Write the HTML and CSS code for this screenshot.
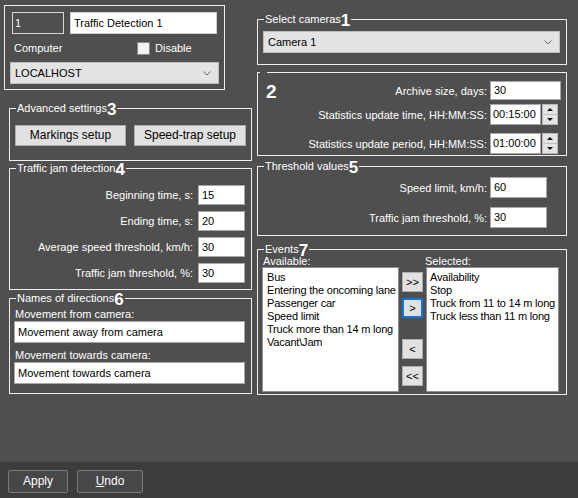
FILE: index.html
```html
<!DOCTYPE html>
<html>
<head>
<meta charset="utf-8">
<link rel="stylesheet" href="styles.css">
</head>
<body>
<div class="window">
  <div class="main">
    <div class="col-left">
      <div class="group g-general">
        <div class="r-ids">
          <div class="field id-field">1</div>
          <div class="field name-field">Traffic Detection 1</div>
        </div>
        <div class="r-comp">
          <span class="comp-label">Computer</span>
          <span class="check"><span class="box"></span>Disable</span>
        </div>
        <div class="combo c-host">LOCALHOST<svg class="chev" width="8" height="5" viewBox="0 0 8 5"><polyline points="0.5,0.5 4,4 7.5,0.5" fill="none" stroke="#6a6a6a" stroke-width="1"/></svg></div>
      </div>

      <div class="group g-adv">
        <span class="legend">Advanced settings<b>3</b></span>
        <div class="btn-row">
          <div class="btn b-mark">Markings setup</div>
          <div class="btn b-trap">Speed-trap setup</div>
        </div>
      </div>

      <div class="group g-jam">
        <span class="legend">Traffic jam detection<b>4</b></span>
        <div class="frow"><span>Beginning time, s:</span><div class="field num">15</div></div>
        <div class="frow"><span>Ending time, s:</span><div class="field num">20</div></div>
        <div class="frow"><span>Average speed threshold, km/h:</span><div class="field num">30</div></div>
        <div class="frow"><span>Traffic jam threshold, %:</span><div class="field num">30</div></div>
      </div>

      <div class="group g-names">
        <span class="legend">Names of directions<b>6</b></span>
        <div class="nlabel">Movement from camera:</div>
        <div class="field wide">Movement away from camera</div>
        <div class="nlabel second">Movement towards camera:</div>
        <div class="field wide">Movement towards camera</div>
      </div>
    </div>

    <div class="col-right">
      <div class="group g-cams">
        <span class="legend">Select cameras<b>1</b></span>
        <div class="combo c-cam">Camera 1<svg class="chev" width="8" height="5" viewBox="0 0 8 5"><polyline points="0.5,0.5 4,4 7.5,0.5" fill="none" stroke="#6a6a6a" stroke-width="1"/></svg></div>
      </div>

      <div class="group g-stats">
        <span class="legend empty"></span>
        <div class="srow s1">
          <span class="big-num">2</span>
          <span>Archive size, days:</span>
          <div class="slot"><div class="field arch">30</div></div>
        </div>
        <div class="srow s2">
          <span>Statistics update time, HH:MM:SS:</span>
          <div class="slot"><div class="field time">00:15:00</div><div class="spin"><span class="up"></span><span class="down"></span></div></div>
        </div>
        <div class="srow s3">
          <span>Statistics update period, HH:MM:SS:</span>
          <div class="slot"><div class="field time">01:00:00</div><div class="spin"><span class="up"></span><span class="down"></span></div></div>
        </div>
      </div>

      <div class="group g-thr">
        <span class="legend">Threshold values<b>5</b></span>
        <div class="srow t1">
          <span>Speed limit, km/h:</span>
          <div class="slot"><div class="field thr">60</div></div>
        </div>
        <div class="srow t2">
          <span>Traffic jam threshold, %:</span>
          <div class="slot"><div class="field thr">30</div></div>
        </div>
      </div>

      <div class="group g-events">
        <span class="legend">Events<b>7</b></span>
        <div class="ev-head">
          <span class="h-avail">Available:</span>
          <span class="h-sel">Selected:</span>
        </div>
        <div class="ev-body">
          <div class="list l-avail">
            <div>Bus</div>
            <div>Entering the oncoming lane</div>
            <div>Passenger car</div>
            <div>Speed limit</div>
            <div>Truck more than 14 m long</div>
            <div>Vacant\Jam</div>
          </div>
          <div class="mv-col">
            <div class="mv m1">&gt;&gt;</div>
            <div class="mv m2 active">&gt;</div>
            <div class="mv m3">&lt;</div>
            <div class="mv m4">&lt;&lt;</div>
          </div>
          <div class="list l-sel">
            <div>Availability</div>
            <div>Stop</div>
            <div>Truck from 11 to 14 m long</div>
            <div>Truck less than 11 m long</div>
          </div>
        </div>
      </div>
    </div>
  </div>
  <div class="footer">
    <div class="fbtn f-apply">Apply</div>
    <div class="fbtn f-undo"><u>U</u>ndo</div>
  </div>
</div>
</body>
</html>
```

FILE: styles.css
```css
* { box-sizing: border-box; }
html, body { margin: 0; padding: 0; }
body {
  width: 578px;
  height: 498px;
  background: #4f4f4f;
  font-family: "Liberation Sans", Arial, sans-serif;
  font-size: 11px;
  color: #ffffff;
  overflow: hidden;
}
.window { width: 578px; height: 498px; display: flex; flex-direction: column; }
.main { height: 462px; display: flex; background: #4f4f4f; }
.col-left { width: 252px; display: flex; flex-direction: column; }
.col-right { width: 310px; margin-left: 5px; display: flex; flex-direction: column; }

.group {
  position: relative;
  border: 1px solid #eeeeee;
}
.legend {
  position: absolute;
  top: -8px;
  left: 6px;
  background: #4f4f4f;
  padding: 0 1px;
  line-height: 14px;
  height: 14px;
  white-space: nowrap;
}
.legend.empty { width: 7px; left: 2px; }
.legend b {
  font-size: 17px;
  line-height: 0;
  vertical-align: -3px;
  font-weight: bold;
}

.field {
  height: 22px;
  background: #ffffff;
  border: 1px solid #a8a8a8;
  color: #000;
  line-height: 20px;
  padding-left: 3px;
  white-space: nowrap;
  overflow: hidden;
}

/* general */
.g-general { margin: 5px 0 0 4px; width: 221px; height: 85px; padding: 6px 0 0 5px; }
.r-ids { display: flex; margin-left: 2px; }
.id-field { width: 52px; background: #4f4f4f; border-color: #d6d6d6; color: #fff; padding-left: 2px; }
.name-field { width: 147px; margin-left: 6px; border-color: #cfcfcf; }
.r-comp { height: 28px; display: flex; align-items: center; }
.comp-label { width: 127px; padding-left: 4px; }
.check { display: flex; align-items: center; }
.box { width: 13px; height: 13px; background: #f3f3f3; border: 1px solid #8a8a8a; margin-right: 5px; }

.combo {
  position: relative;
  height: 22px;
  background: #e3e3e3;
  border: 1px solid #bdbdbd;
  color: #000;
  line-height: 20px;
  padding-left: 4px;
}
.chev { position: absolute; right: 7px; top: 8px; }
.c-host { width: 209px; }
.c-cam { width: 297px; }

/* advanced */
.g-adv { margin: 18px 0 0 9px; width: 243px; height: 53px; padding: 16px 0 0 5px; }
.btn-row { display: flex; }
.btn {
  height: 21px;
  background: #e1e1e1;
  border: 1px solid #adadad;
  color: #000;
  text-align: center;
  line-height: 19px;
  font-size: 12px;
}
.b-mark { width: 111px; }
.b-trap { width: 112px; margin-left: 8px; }

/* traffic jam */
.g-jam { margin: 7px 0 0 9px; width: 243px; height: 122px; padding: 16px 6px 0 0; }
.frow { display: flex; justify-content: flex-end; align-items: center; height: 20px; margin-bottom: 6px; }
.frow span { margin-right: 5px; }
.num { width: 47px; height: 20px; line-height: 18px; }

/* names */
.g-names { margin: 8px 0 0 9px; width: 243px; height: 96px; padding: 8px 0 0 4px; }
.nlabel { line-height: 14px; height: 14px; padding-left: 1px; }
.nlabel.second { margin-top: 5px; }
.wide { width: 231px; }

/* cameras */
.g-cams { margin-top: 19px; width: 310px; height: 46px; padding: 11px 0 0 5px; }

/* stats */
.g-stats { margin-top: 7px; width: 310px; height: 84px; padding: 8px 5px 0 0; }
.srow { display: flex; justify-content: flex-end; align-items: center; }
.srow > span { margin-right: 3px; }
.slot { width: 71px; display: flex; }
.s1 { height: 19px; }
.s2 { height: 21px; margin-top: 4px; }
.s3 { height: 21px; margin-top: 8px; }
.big-num {
  margin-right: auto !important;
  margin-left: 8px;
  font-size: 19px;
  font-weight: bold;
  line-height: 20px;
  align-self: flex-start;
  margin-top: 1px;
}
.arch { width: 71px; height: 19px; line-height: 17px; }
.time { width: 51px; height: 21px; line-height: 19px; padding-left: 2px; }
.spin {
  width: 16px;
  height: 21px;
  margin-left: 1px;
  border: 1px solid #b8b8b8;
  background: #e4e4e4;
  display: flex;
  flex-direction: column;
}
.spin span { flex: 1; position: relative; }
.spin .up { border-bottom: 1px solid #c4c4c4; }
.spin .up::after, .spin .down::after {
  content: "";
  position: absolute;
  left: 4px;
  width: 0; height: 0;
  border-left: 3px solid transparent;
  border-right: 3px solid transparent;
}
.spin .up::after { top: 3px; border-bottom: 3px solid #111; }
.spin .down::after { top: 3px; border-top: 3px solid #111; }

/* thresholds */
.g-thr { margin-top: 10px; width: 310px; height: 70px; padding: 10px 5px 0 0; }
.t1, .t2 { height: 21px; }
.t2 { margin-top: 9px; }
.thr { width: 57px; height: 21px; line-height: 19px; }

/* events */
.g-events { margin-top: 13px; width: 310px; height: 146px; padding: 0 0 0 4px; }
.ev-head { height: 17px; line-height: 12px; padding-top: 5px; display: flex; }
.h-avail { width: 163px; padding-left: 1px; }
.ev-body { display: flex; }
.list {
  height: 125px;
  background: #fff;
  border: 1px solid #8e8e8e;
  color: #000;
  padding: 3px 0 0 4px;
  line-height: 13px;
  font-size: 11px;
  letter-spacing: -0.2px;
  white-space: nowrap;
  overflow: hidden;
}
.l-avail { width: 137px; }
.l-sel { width: 133px; margin-left: 2px; padding-left: 3px; }
.mv-col { width: 22px; margin-left: 3px; padding-top: 5px; display: flex; flex-direction: column; }
.mv {
  width: 21px;
  height: 20px;
  background: #e1e1e1;
  border: 1px solid #adadad;
  color: #000;
  text-align: center;
  line-height: 18px;
  font-size: 11px;
}
.m2 { margin-top: 6px; }
.m3 { margin-top: 21px; }
.m4 { margin-top: 7px; }
.mv.active { border: 2px solid #0a78d7; line-height: 16px; }

/* footer */
.footer { height: 36px; background: #3d3c3d; display: flex; padding: 8px 0 0 8px; }
.fbtn {
  height: 23px;
  background: #474649;
  border: 1px solid #7a7a7c;
  border-radius: 2px;
  color: #fff;
  text-align: center;
  line-height: 21px;
  font-size: 12px;
}
.f-apply { width: 60px; }
.f-undo { width: 66px; margin-left: 9px; }
```
